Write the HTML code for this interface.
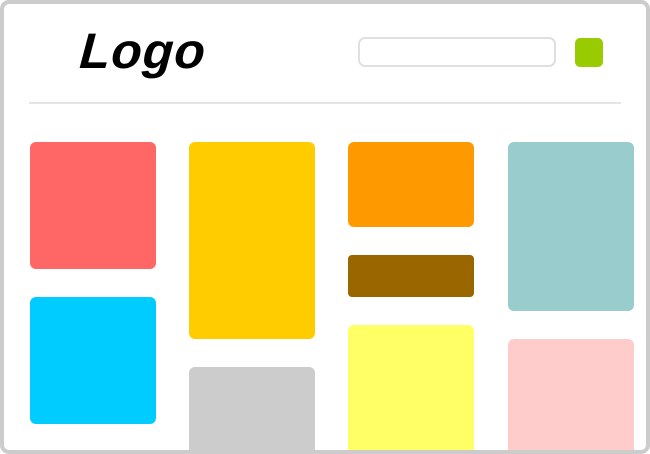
<!DOCTYPE html>
<html><head><style>
html,body{margin:0;padding:0;background:#fff;}
.frame{position:absolute;left:0;top:0;width:642px;height:446px;border:4px solid #cccccc;border-radius:9px;background:#fff;overflow:hidden;}
.b{position:absolute;border-radius:6px;}
</style></head><body>
<div class="frame">
<div style="position:absolute;left:76px;top:18px;font-family:'Liberation Sans',sans-serif;font-style:italic;font-weight:bold;font-size:50px;color:#000;transform:skewX(-4deg);letter-spacing:1px;">Logo</div>
<div style="position:absolute;left:354px;top:33px;width:194px;height:26px;border:2.5px solid #e0e0e0;border-radius:7px;"></div>
<div style="position:absolute;left:571px;top:34px;width:28px;height:29px;background:#99cc00;border-radius:5px;"></div>
<div style="position:absolute;left:25px;top:98px;width:592px;height:2px;background:#e5e5e5;"></div>
<div class="b" style="left:26px;top:138px;width:126px;height:127px;background:#ff6666"></div>
<div class="b" style="left:26px;top:293px;width:126px;height:127px;background:#00ccff"></div>
<div class="b" style="left:185px;top:138px;width:126px;height:197px;background:#ffcc00"></div>
<div class="b" style="left:185px;top:363px;width:126px;height:100px;background:#cccccc"></div>
<div class="b" style="left:344px;top:138px;width:126px;height:85px;background:#ff9900"></div>
<div class="b" style="left:344px;top:251px;width:126px;height:42px;background:#996600;border-radius:4px"></div>
<div class="b" style="left:344px;top:321px;width:126px;height:140px;background:#ffff66"></div>
<div class="b" style="left:504px;top:138px;width:126px;height:169px;background:#99cccc"></div>
<div class="b" style="left:504px;top:335px;width:126px;height:130px;background:#ffcccc"></div>
</div>
</body></html>
